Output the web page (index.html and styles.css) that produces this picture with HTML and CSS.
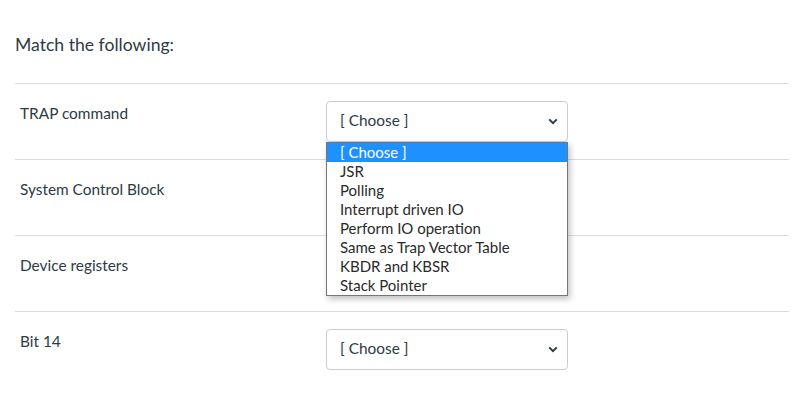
FILE: index.html
```html
<!DOCTYPE html>
<html lang="en">
<head>
    <meta charset="UTF-8">
    <meta name="viewport" content="width=device-width, initial-scale=1.0">
    <title>Match the following</title>
    <link rel="stylesheet" href="styles.css">
</head>
<body>
    <div class="question">
        <div class="question-text">Match the following:</div>

        <div class="answers">
            <div class="answer-row">
                <div class="answer-label">TRAP command</div>
                <div class="answer-select">
                    <div class="select-box is-open">
                        <span class="select-value">[ Choose ]</span>
                        <svg class="chevron" width="10" height="7" viewBox="0 0 10 7"><path d="M1.2 1.4 L5 5.2 L8.8 1.4" fill="none" stroke="#2d3b45" stroke-width="2"/></svg>
                    </div>
                    <ul class="select-list">
                        <li class="selected">[ Choose ]</li>
                        <li>JSR</li>
                        <li>Polling</li>
                        <li>Interrupt driven IO</li>
                        <li>Perform IO operation</li>
                        <li>Same as Trap Vector Table</li>
                        <li>KBDR and KBSR</li>
                        <li>Stack Pointer</li>
                    </ul>
                </div>
            </div>

            <div class="answer-row">
                <div class="answer-label">System Control Block</div>
                <div class="answer-select">
                    <div class="select-box">
                        <span class="select-value">[ Choose ]</span>
                        <svg class="chevron" width="10" height="7" viewBox="0 0 10 7"><path d="M1.2 1.4 L5 5.2 L8.8 1.4" fill="none" stroke="#2d3b45" stroke-width="2"/></svg>
                    </div>
                </div>
            </div>

            <div class="answer-row">
                <div class="answer-label">Device registers</div>
                <div class="answer-select">
                    <div class="select-box">
                        <span class="select-value">[ Choose ]</span>
                        <svg class="chevron" width="10" height="7" viewBox="0 0 10 7"><path d="M1.2 1.4 L5 5.2 L8.8 1.4" fill="none" stroke="#2d3b45" stroke-width="2"/></svg>
                    </div>
                </div>
            </div>

            <div class="answer-row">
                <div class="answer-label">Bit 14</div>
                <div class="answer-select">
                    <div class="select-box">
                        <span class="select-value">[ Choose ]</span>
                        <svg class="chevron" width="10" height="7" viewBox="0 0 10 7"><path d="M1.2 1.4 L5 5.2 L8.8 1.4" fill="none" stroke="#2d3b45" stroke-width="2"/></svg>
                    </div>
                </div>
            </div>
        </div>
    </div>
</body>
</html>
```

FILE: styles.css
```css
body {
    margin: 0;
    background: #fff;
    font-family: Lato, "Open Sans", sans-serif;
    color: #2d3b45;
}
.question {
    width: 774px;
    margin-left: 15px;
    padding-top: 32px;
}
.question-text {
    font-size: 17.6px;
    line-height: 26px;
    margin-bottom: 25px;
}
.answer-row {
    display: flex;
    height: 75px;
    border-top: 1px solid #dcdcdc;
}
.answer-label {
    width: 306px;
    padding-left: 5px;
    padding-top: 19px;
    font-size: 15.4px;
    line-height: 20px;
}
.answer-select {
    position: relative;
    padding-top: 17px;
}
.select-box {
    box-sizing: border-box;
    width: 242px;
    height: 41px;
    border: 1px solid #c7cdd1;
    border-radius: 4px;
    display: flex;
    align-items: center;
    justify-content: space-between;
    padding: 0 9px 0 13px;
    font-size: 15.4px;
    line-height: 20px;
}
.select-value {
    margin-top: -3px;
}
.chevron {
    display: block;
}
.select-list {
    position: absolute;
    top: 58px;
    left: 0;
    box-sizing: border-box;
    width: 242px;
    margin: 0;
    padding: 0;
    list-style: none;
    background: #fff;
    border: 1px solid #767676;
    box-shadow: 2px 3px 6px rgba(0, 0, 0, 0.25);
    font-size: 15px;
    line-height: 19px;
    color: #2a2a2a;
    z-index: 2;
}
.select-list li {
    padding-left: 13px;
}
.select-list li.selected {
    background: #1e90ff;
    color: #fff;
}
```
